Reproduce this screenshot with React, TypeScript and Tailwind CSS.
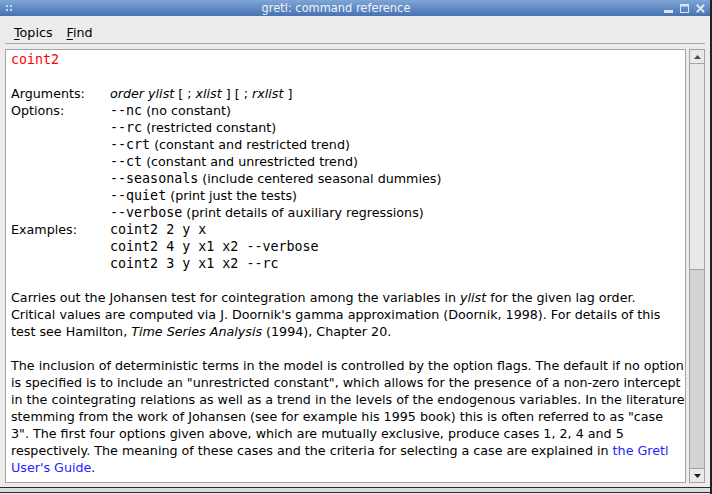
import React from 'react';

const sans = "font-['DejaVu_Sans','Liberation_Sans',sans-serif]";
const mono = "font-['DejaVu_Sans_Mono','Liberation_Mono',monospace]";

// option flags shown in the "Options:" block
const options = [
  { flag: '--nc', text: '(no constant)' },
  { flag: '--rc', text: '(restricted constant)' },
  { flag: '--crt', text: '(constant and restricted trend)' },
  { flag: '--ct', text: '(constant and unrestricted trend)' },
  { flag: '--seasonals', text: '(include centered seasonal dummies)' },
  { flag: '--quiet', text: '(print just the tests)' },
  { flag: '--verbose', text: '(print details of auxiliary regressions)' },
];

const examples = ['coint2 2 y x', 'coint2 4 y x1 x2 --verbose', 'coint2 3 y x1 x2 --rc'];

const Row: React.FC<{ label?: string; children: React.ReactNode }> = ({ label, children }) => (
  <div className="flex h-[17px] items-center whitespace-pre">
    <span className="w-[99px] shrink-0">{label}</span>
    <span>{children}</span>
  </div>
);

const Line: React.FC<{ children?: React.ReactNode }> = ({ children }) => (
  <div className="flex h-[17px] items-center whitespace-pre">{children}</div>
);

const TitleBar: React.FC = () => (
  <div className="flex h-[16px] items-center bg-gradient-to-b from-[#7fa5d8] to-[#4673b0] text-[#eef3fa]">
    {/* grip dots */}
    <svg width="6" height="6" className="ml-[6px]" viewBox="0 0 6 6">
      <rect x="0" y="0" width="2" height="2" fill="#c9d8ec" />
      <rect x="4" y="0" width="2" height="2" fill="#c9d8ec" />
      <rect x="0" y="4" width="2" height="2" fill="#c9d8ec" />
      <rect x="4" y="4" width="2" height="2" fill="#c9d8ec" />
    </svg>
    <div className="flex-1 pr-[4px] text-center text-[12.7px] leading-none font-['DejaVu_Sans_Condensed','DejaVu_Sans',sans-serif]">
      gretl: command reference
    </div>
    <div className="mr-[5px] flex items-center gap-[7px]">
      <svg width="9" height="9" viewBox="0 0 9 9">
        <rect x="0" y="6" width="9" height="3" fill="#dbe6f3" />
      </svg>
      <svg width="9" height="9" viewBox="0 0 9 9">
        <rect x="0.5" y="0.5" width="8" height="8" fill="none" stroke="#dbe6f3" />
        <rect x="0" y="0" width="9" height="2.5" fill="#dbe6f3" />
      </svg>
      <svg width="9" height="9" viewBox="0 0 9 9">
        <path d="M0.8 0.8 L8.2 8.2 M8.2 0.8 L0.8 8.2" stroke="#dbe6f3" strokeWidth="2" />
      </svg>
    </div>
  </div>
);

const ScrollBar: React.FC = () => (
  <div className="ml-[3px] flex w-[16px] shrink-0 flex-col border border-[#a3a3a3] bg-[#e9e9e9]">
    <div className="flex h-[14px] items-center justify-center border-b border-[#a3a3a3]">
      <svg width="7" height="4" viewBox="0 0 7 4">
        <path d="M3.5 0 L7 4 L0 4 Z" fill="#4a4a4a" />
      </svg>
    </div>
    <div className="h-[205px]" />
    <div className="flex-1 border-y border-[#a3a3a3] bg-[#d3d3d3]" />
    <div className="flex h-[13px] items-center justify-center">
      <svg width="7" height="4" viewBox="0 0 7 4">
        <path d="M0 0 L7 0 L3.5 4 Z" fill="#1a1a1a" />
      </svg>
    </div>
  </div>
);

export default function App() {
  const link = 'text-[#2222ff]';
  return (
    <div className={`flex h-[494px] w-[712px] flex-col overflow-hidden border-r-2 border-[#222] bg-[#ececec] ${sans}`}>
      <TitleBar />

      {/* menu bar */}
      <div className="flex h-[27px] items-start gap-[14px] pl-[14px] pt-[8px] text-[12.7px] leading-[17px] text-black">
        <span>
          <span className="underline underline-offset-2">T</span>opics
        </span>
        <span>
          <span className="underline underline-offset-2">F</span>ind
        </span>
      </div>
      <div className="mx-[5px] h-px bg-[#a8a8a8]" />

      <div className="mx-[5px] mt-[5px] flex h-[434px]">
        <div className="min-w-0 flex-1 overflow-hidden border border-[#a3a3a3] bg-white pl-[5px] pt-[1px] text-[12.7px] text-black">
          <Line>
            <span className={`${mono} text-[13.33px] text-[#ff0000]`}>coint2</span>
          </Line>
          <Line />
          <Row label="Arguments:">
            <i>order ylist</i> [ ; <i>xlist</i> ] [ ; <i>rxlist</i> ]
          </Row>
          {options.map((o, i) => (
            <Row key={o.flag} label={i === 0 ? 'Options:' : undefined}>
              <span className={`${mono} text-[13.33px]`}>{o.flag}</span> {o.text}
            </Row>
          ))}
          {examples.map((e, i) => (
            <Row key={e} label={i === 0 ? 'Examples:' : undefined}>
              <span className={`${mono} text-[13.33px]`}>{e}</span>
            </Row>
          ))}
          <Line />
          <Line>
            Carries out the Johansen test for cointegration among the variables in <i>ylist</i> for the given lag order.
          </Line>
          <Line>
            Critical values are computed via J. Doornik's gamma approximation (Doornik, 1998). For details of this
          </Line>
          <Line>
            test see Hamilton, <i>Time Series Analysis</i> (1994), Chapter 20.
          </Line>
          <Line />
          <Line>
            The inclusion of deterministic terms in the model is controlled by the option flags. The default if no option
          </Line>
          <Line>
            is specified is to include an "unrestricted constant", which allows for the presence of a non-zero intercept
          </Line>
          <Line>
            in the cointegrating relations as well as a trend in the levels of the endogenous variables. In the literature
          </Line>
          <Line>stemming from the work of Johansen (see for example his 1995 book) this is often referred to as "case</Line>
          <Line>3". The first four options given above, which are mutually exclusive, produce cases 1, 2, 4 and 5</Line>
          <Line>
            respectively. The meaning of these cases and the criteria for selecting a case are explained in{' '}
            <span className={link}>the Gretl</span>
          </Line>
          <Line>
            <span className={link}>User's Guide</span>.
          </Line>
        </div>
        <ScrollBar />
      </div>

      {/* bottom frame */}
      <div className="mt-[4px] h-px bg-[#2a2a2a]" />
      <div className="h-[4px] bg-[#dcdcdc]" />
      <div className="h-px bg-[#2a2a2a]" />
    </div>
  );
}
